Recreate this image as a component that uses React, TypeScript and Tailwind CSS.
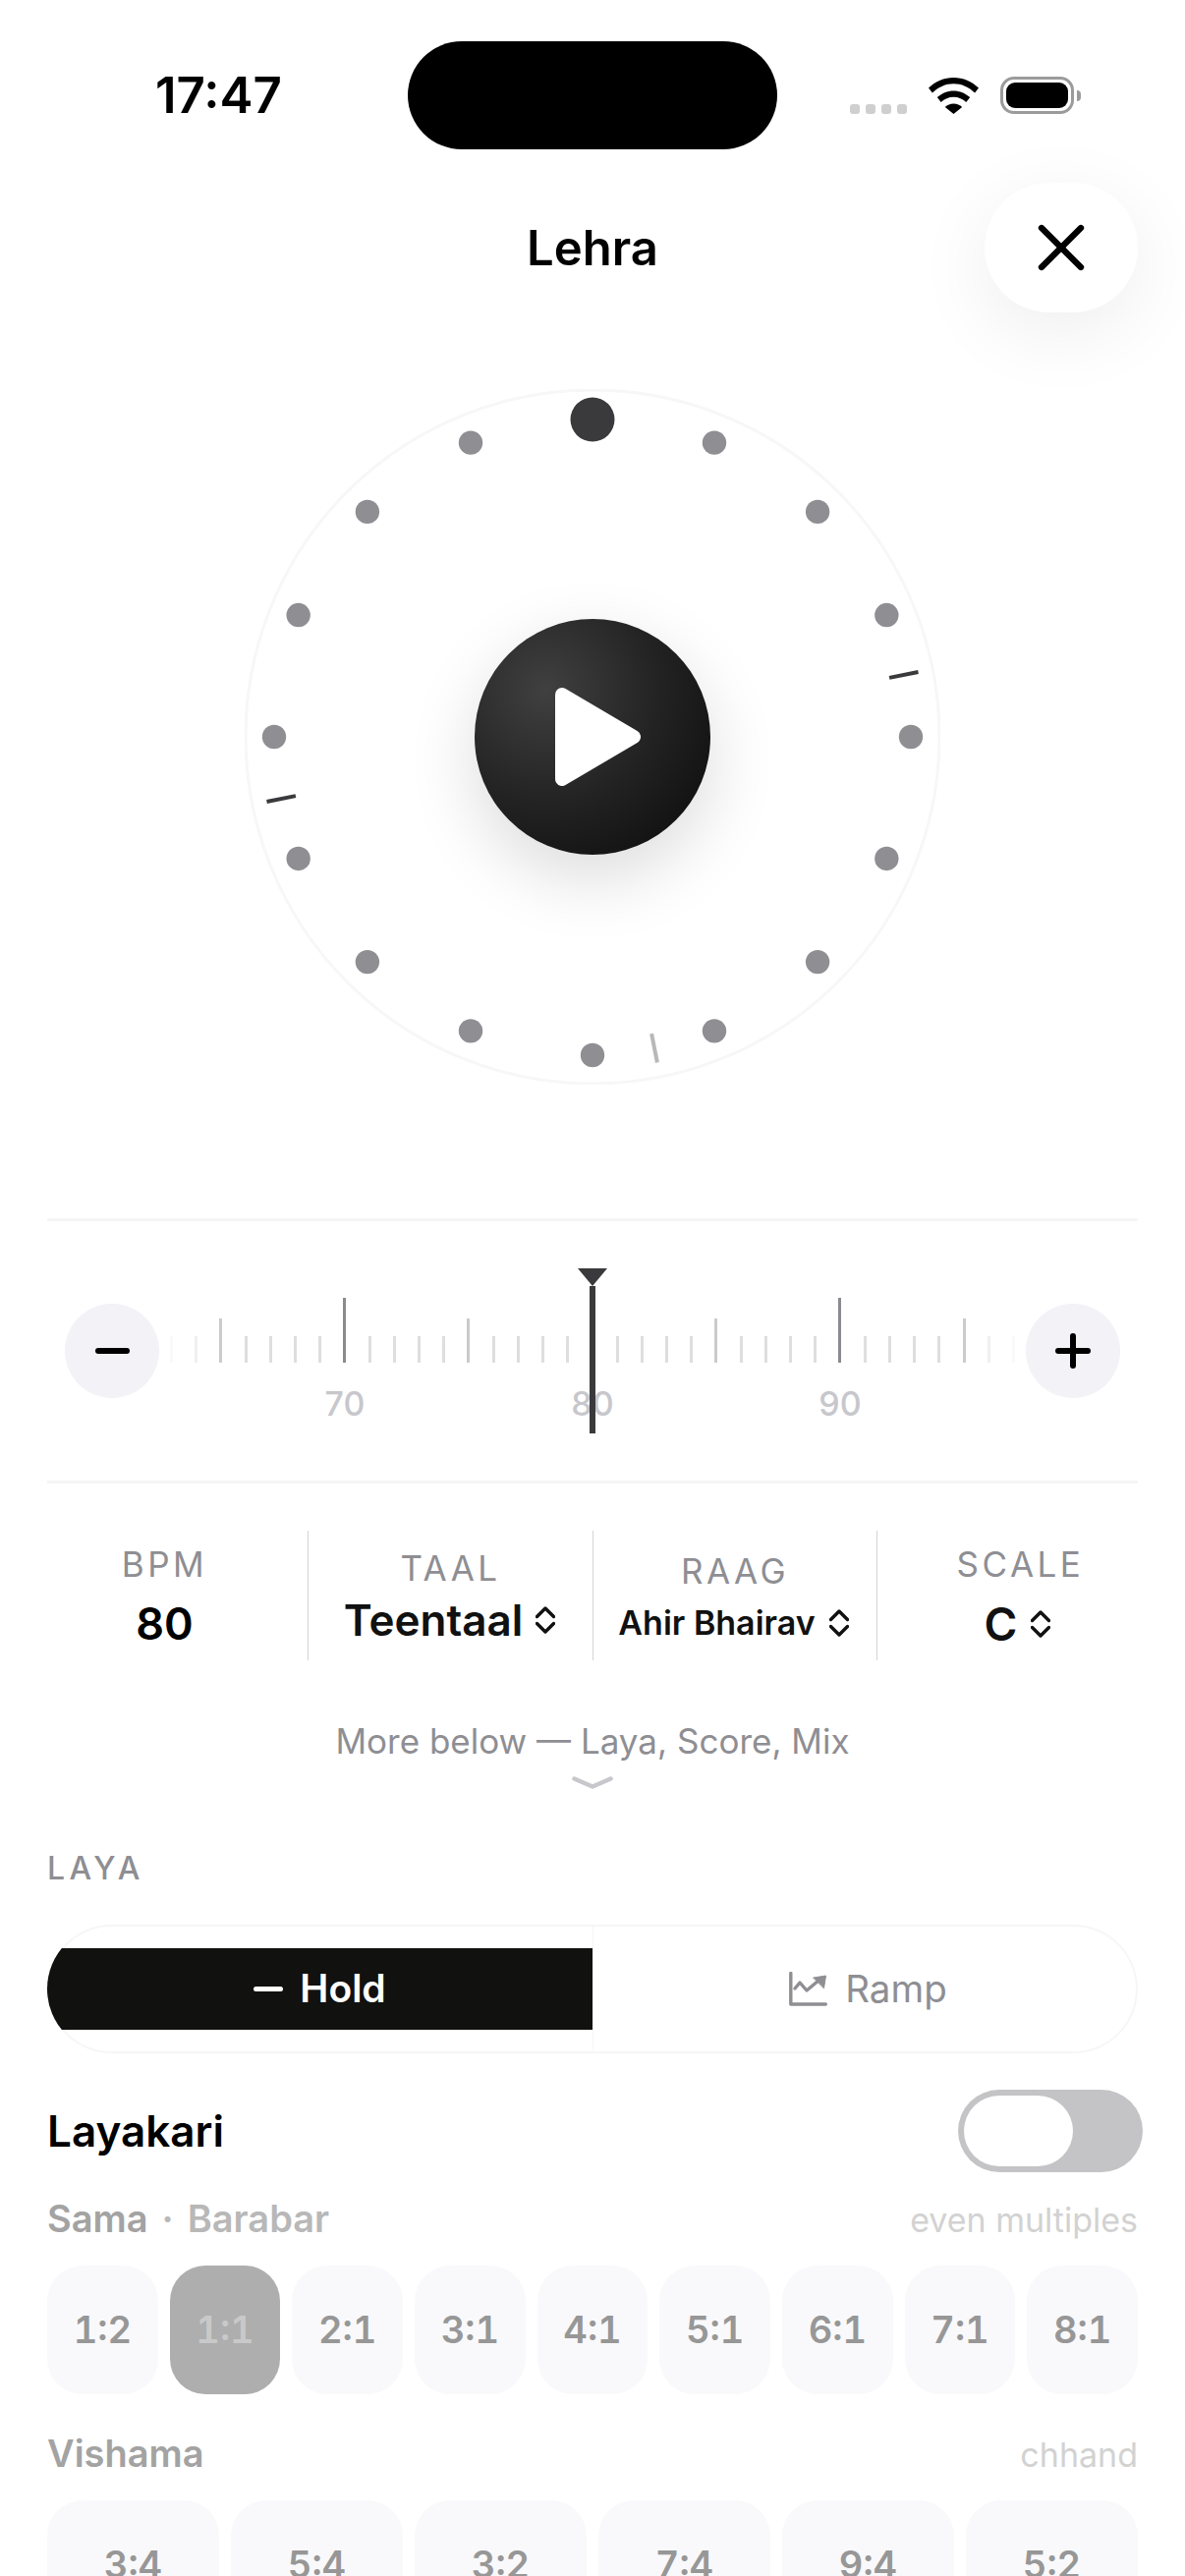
import React from 'react';
import { X } from 'lucide-react';

const CX = 354;
const DOT_R = 324;

const polar = (deg: number, r: number) => {
  const a = (deg * Math.PI) / 180;
  return { x: CX + r * Math.sin(a), y: CX - r * Math.cos(a) };
};

const dots = Array.from({ length: 16 }, (_, i) => i * 22.5);

const dialTicks = [
  { deg: 78.75, color: '#3a3a3c' },
  { deg: 168.75, color: '#b8b8ba' },
  { deg: 258.75, color: '#3a3a3c' },
];

const rulerValues = Array.from({ length: 35 }, (_, i) => 63 + i);

const samaRatios = ['1:2', '1:1', '2:1', '3:1', '4:1', '5:1', '6:1', '7:1', '8:1'];
const vishamaRatios = ['3:4', '5:4', '3:2', '7:4', '9:4', '5:2'];

const rulerTickClass = (v: number) => {
  if (v === 63 || v === 97) return 'h-[27px] bg-[#f9f9f9]';
  if (v === 64 || v === 96) return 'h-[27px] bg-[#f0f0f0]';
  if (v % 10 === 0) return 'h-[66px] bg-[#8b8b8f]';
  if (v % 5 === 0) return 'h-[45px] bg-[#cbcbcb]';
  return 'h-[27px] bg-[#dedede]';
};

const UpDown = () => (
  <svg viewBox="0 0 20 28" className="h-[28px] w-[20px]" fill="none" stroke="#111" strokeWidth="3.4" strokeLinecap="round" strokeLinejoin="round">
    <path d="M1.5 10.5 10 2l8.5 8.5" />
    <path d="M1.5 17.5 10 26l8.5-8.5" />
  </svg>
);

const Dial = () => (
  <div className="relative mx-auto mt-[78px] flex h-[708px] w-[708px] items-center justify-center">
    <svg viewBox="0 0 708 708" className="absolute inset-0 h-full w-full">
      <circle cx={CX} cy={CX} r={353} fill="none" stroke="#f7f7f8" strokeWidth="3" />
      {dots.map((deg) => {
        const p = polar(deg, deg === 0 ? DOT_R - 1 : DOT_R);
        return <circle key={deg} cx={p.x} cy={p.y} r={deg === 0 ? 22.5 : 12.2} fill={deg === 0 ? '#3a3a3c' : '#8e8e93'} />;
      })}
      {dialTicks.map((t) => {
        const a = polar(t.deg, 308);
        const b = polar(t.deg, 338);
        return <line key={t.deg} x1={a.x} y1={a.y} x2={b.x} y2={b.y} stroke={t.color} strokeWidth="4" />;
      })}
    </svg>
    <button className="relative flex h-[240px] w-[240px] items-center justify-center rounded-full bg-[radial-gradient(circle_at_30%_30%,#404040_0%,#222222_50%,#090909_100%)] shadow-[0_24px_70px_rgba(0,0,0,0.14)]">
      <svg viewBox="0 0 87 100" className="ml-[11px] h-[100px] w-[87px]" fill="#fff" stroke="#fff" strokeWidth="14" strokeLinejoin="round">
        <path d="M7 7 80 50 7 93Z" />
      </svg>
    </button>
  </div>
);

const Ruler = () => (
  <div className="mx-[66px] flex h-[264px] items-start justify-between">
    <button className="mt-[84px] flex h-[96px] w-[96px] items-center justify-center rounded-full bg-[#f2f2f7]">
      <span className="h-[6px] w-[35px] rounded-full bg-black" />
    </button>
    <div className="relative w-[860px] pt-[78px]">
      <div className="flex h-[66px] items-end justify-between">
        {rulerValues.map((v) => (
          <span key={v} className={`w-[3px] ${rulerTickClass(v)}`} />
        ))}
      </div>
      <div className="mx-auto mt-[22px] flex w-[564px] justify-between text-center text-[34px] font-medium leading-[40px] text-[#c7c7cc]">
        <span className="w-[60px]">70</span>
        <span className="w-[60px]">80</span>
        <span className="w-[60px]">90</span>
      </div>
      <div className="absolute left-1/2 top-[48px] flex -translate-x-1/2 flex-col items-center">
        <svg viewBox="0 0 30 18" className="h-[18px] w-[30px]" fill="#3a3a3c">
          <path d="M0 0h30L15 18Z" />
        </svg>
        <span className="h-[150px] w-[6px] bg-[#3a3a3c]" />
      </div>
    </div>
    <button className="mt-[84px] flex h-[96px] w-[96px] items-center justify-center rounded-full bg-[#f2f2f7]">
      <svg viewBox="0 0 36 36" className="h-[36px] w-[36px]" stroke="#000" strokeWidth="6" strokeLinecap="round">
        <path d="M3 18h30M18 3v30" />
      </svg>
    </button>
  </div>
);

const Stats = () => (
  <div className="-mx-[26px] mt-[48px] grid h-[132px] grid-cols-[291px_290px_289px_1fr] text-[#111]">
    <div className="flex flex-col items-center justify-center pt-[2px]">
      <span className="text-[35px] leading-[34px] tracking-[0.1em] text-[#8e8e93]">BPM</span>
      <span className="mt-[21px] text-[45px] font-semibold leading-[46px] text-black">80</span>
    </div>
    <div className="flex flex-col items-center justify-center border-l border-[#d4d4d8] pt-[2px]">
      <span className="text-[35px] leading-[34px] tracking-[0.1em] text-[#8e8e93]">TAAL</span>
      <span className="mt-[13px] flex items-center gap-[13px] pr-[2px] text-[44px] font-semibold leading-[46px]">
        Teentaal <UpDown />
      </span>
    </div>
    <div className="flex flex-col items-center justify-center border-l border-[#d4d4d8] pt-[4px]">
      <span className="text-[35px] leading-[34px] tracking-[0.1em] text-[#8e8e93]">RAAG</span>
      <span className="mt-[18px] flex items-center gap-[14px] pr-[3px] text-[34px] font-semibold leading-[36px]">
        Ahir Bhairav <UpDown />
      </span>
    </div>
    <div className="flex flex-col items-center justify-center border-l border-[#d4d4d8] pt-[2px]">
      <span className="text-[35px] leading-[34px] tracking-[0.1em] text-[#8e8e93]">SCALE</span>
      <span className="mt-[21px] flex items-center gap-[14px] pr-[6px] text-[46px] font-semibold leading-[46px]">
        C <UpDown />
      </span>
    </div>
  </div>
);

const LayaSegment = () => (
  <div className="mt-[41px] grid h-[131px] grid-cols-2 overflow-hidden rounded-full shadow-[inset_0_0_0_2px_#f6f6f7]">
    <div className="flex items-center">
      <div className="flex h-[83px] w-full items-center justify-center gap-[17px] bg-[#111110] text-[39px] font-semibold text-white">
        <span className="h-[5px] w-[30px] rounded-full bg-white" />
        Hold
      </div>
    </div>
    <div className="flex items-center justify-center gap-[18px] border-l border-[#f6f6f7] pl-[5px] text-[38.5px] text-[#8e8e93]">
      <svg viewBox="0 0 39 35" className="h-[35px] w-[39px]" fill="none" stroke="#8e8e93" strokeWidth="3.4" strokeLinecap="round" strokeLinejoin="round">
        <path d="M1.8 1.5V33h35.5" />
        <path d="m6 17 5-6 7 8 12-10" />
        <path d="M25 6 37.5 4 35.5 16.5Z" fill="#8e8e93" strokeWidth="1" />
      </svg>
      Ramp
    </div>
  </div>
);

const RatioGroup = ({ items, active, cols }: { items: string[]; active?: string; cols: string }) => (
  <div className={`grid gap-[12px] ${cols}`}>
    {items.map((r) => (
      <div
        key={r}
        className={`flex h-[131px] items-center justify-center rounded-[36px] text-[38px] font-semibold tabular-nums ${
          r === active ? 'bg-[#aeaeae] text-[#c9c9c9]' : 'bg-[#f9f9fb] text-[#979797]'
        }`}
      >
        {r}
      </div>
    ))}
  </div>
);

export default function App() {
  return (
    <div className="h-[2622px] w-[1206px] overflow-hidden bg-white font-['Inter',sans-serif] text-black">
      {/* status bar */}
      <div className="flex h-[152px] pt-[42px]">
        <div className="flex h-[110px] w-[415px] items-center pl-[158px] text-[51px] font-semibold">17:47</div>
        <div className="h-[110px] w-[376px] rounded-full bg-black" />
        <div className="flex h-[74px] items-end pl-[74px]">
          <div className="flex gap-[6px]">
            <span className="h-[10px] w-[10px] rounded-[3px] bg-[#cfcfcf]" />
            <span className="h-[10px] w-[10px] rounded-[3px] bg-[#cfcfcf]" />
            <span className="h-[10px] w-[10px] rounded-[3px] bg-[#cfcfcf]" />
            <span className="h-[10px] w-[10px] rounded-[3px] bg-[#cfcfcf]" />
          </div>
          <svg viewBox="0 0 51 37" className="ml-[22px] h-[37px] w-[51px]" fill="#000">
            <path d="M25.5 0C15.8 0 7 3.7 0 10.6l3.9 5C10 9.6 17.4 6.3 25.5 6.3S41 9.6 47.1 15.6l3.9-5C44 3.7 35.2 0 25.5 0Z" />
            <path d="M25.5 13.4c-6.4 0-12.2 2.5-16.7 6.7l3.9 5c3.4-3.3 7.9-5.3 12.8-5.3s9.4 2 12.8 5.3l3.9-5c-4.5-4.2-10.3-6.7-16.7-6.7Z" />
            <path d="M25.5 26.5c-3.4 0-6.4 1.3-8.7 3.5l8.7 7 8.7-7c-2.3-2.2-5.3-3.5-8.7-3.5Z" />
          </svg>
          <div className="ml-[22px] flex items-center">
            <div className="h-[38px] w-[75px] rounded-[14px] border-[3px] border-[#9b9b9b] p-[3px]">
              <div className="h-full w-full rounded-[9px] bg-black" />
            </div>
            <span className="ml-[3px] h-[11px] w-[4px] rounded-r-full bg-[#9b9b9b]" />
          </div>
        </div>
      </div>

      {/* header */}
      <div className="mx-[48px] mt-[34px] grid h-[132px] grid-cols-[1fr_auto_1fr] items-center">
        <span />
        <h1 className="text-[49px] font-semibold leading-none">Lehra</h1>
        <button className="flex h-[132px] w-[156px] items-center justify-center justify-self-end rounded-full bg-white shadow-[0_20px_80px_rgba(0,0,0,0.07)]">
          <X size={80} strokeWidth={1.9} color="#000" />
        </button>
      </div>

      <Dial />

      <div className="mx-[48px] mt-[136px] h-[3px] bg-[#f5f5f6]" />
      <Ruler />
      <div className="mx-[48px] h-[3px] bg-[#f5f5f6]" />

      <div className="px-[48px]">
        <Stats />

        <div className="mt-[62px] text-center text-[35px] leading-[40px] text-[#8e8e93]">More below — Laya, Score, Mix</div>
        <svg viewBox="0 0 42 13" className="mx-auto mt-[16px] h-[13px] w-[42px]" fill="none" stroke="#c7c7cc" strokeWidth="4.5" strokeLinecap="round" strokeLinejoin="round">
          <path d="M2.5 2.5 21 10.5l18.5-8" />
        </svg>

        <div className="mt-[65px] text-[32px] font-medium leading-[32px] tracking-[0.14em] text-[#8e8e93]">LAYA</div>
        <LayaSegment />

        <div className="mt-[37px] flex h-[84px] items-center justify-between">
          <span className="text-[44px] font-semibold">Layakari</span>
          <div className="-mr-[5px] flex h-[84px] w-[188px] items-center rounded-full bg-[#c4c4c6] pl-[6px]">
            <span className="h-[72px] w-[111px] rounded-full bg-white" />
          </div>
        </div>

        <div className="mt-[27px] flex h-[40px] items-baseline justify-between">
          <span className="text-[38px] font-semibold leading-[40px] text-[#a3a3a3]">
            Sama<span className="mx-[14px] text-[#b8b8b8]">·</span><span className="text-[#b8b8b8]">Barabar</span>
          </span>
          <span className="text-[34px] leading-[40px] text-[#d2d2d2]">even multiples</span>
        </div>
        <div className="mt-[28px]">
          <RatioGroup items={samaRatios} active="1:1" cols="grid-cols-9" />
        </div>

        <div className="mt-[40px] flex h-[40px] items-baseline justify-between">
          <span className="text-[38px] font-semibold leading-[40px] text-[#a3a3a3]">Vishama</span>
          <span className="text-[34px] leading-[40px] text-[#d2d2d2]">chhand</span>
        </div>
        <div className="mt-[28px]">
          <RatioGroup items={vishamaRatios} cols="grid-cols-6" />
        </div>
      </div>
    </div>
  );
}
